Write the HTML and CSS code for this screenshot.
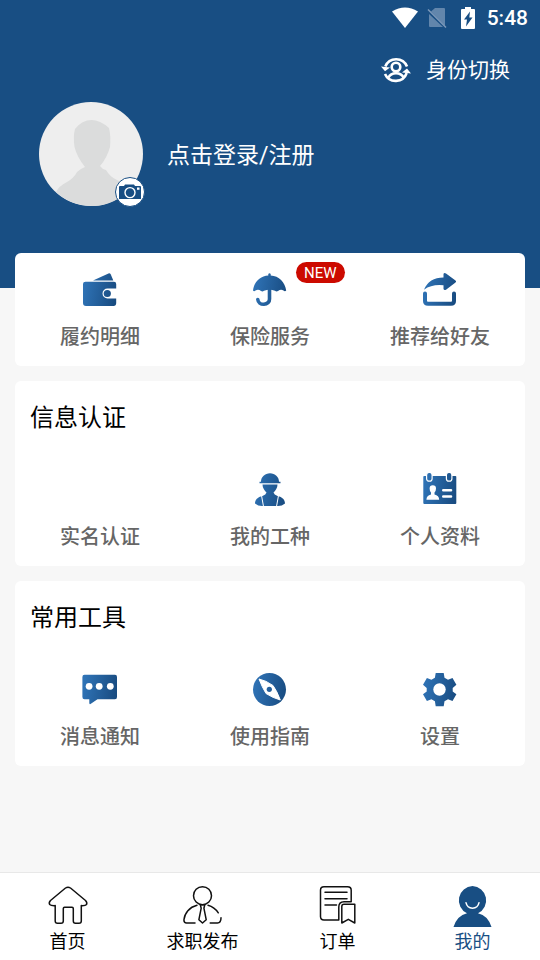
FILE: index.html
```html
<!DOCTYPE html>
<html lang="zh-CN">
<head>
<meta charset="utf-8">
<meta name="viewport" content="width=device-width, initial-scale=1">
<title>我的</title>
<link rel="stylesheet" href="styles.css">
</head>
<body>
<svg class="defs" aria-hidden="true">
  <defs>
    <linearGradient id="blue" gradientUnits="userSpaceOnUse" x1="0" y1="14" x2="34" y2="20">
      <stop offset="0" stop-color="#2f73b6"/>
      <stop offset="1" stop-color="#184b80"/>
    </linearGradient>
  </defs>
</svg>

<header class="hero">
  <div class="status">
    <svg width="26" height="22" viewBox="0 0 26 22" fill="#fff"><path d="M0 4.500Q13-3.500 26 4.500L13 21Z"/></svg>
    <svg class="sim" width="20" height="22" viewBox="0 0 20 22"><path d="M8 1h9q1 0 1 1v17L4 4.500ZM2 7l14 13H3q-1 0-1-1Z" fill="#6286ac"/><path d="M1 2.500L19 20.500" stroke="#7d9abb" stroke-width="1.500"/></svg>
    <svg width="14" height="22" viewBox="0 0 14 22"><path d="M4 0h6v2h3q1 0 1 1v18q0 1-1 1H1q-1 0-1-1V3q0-1 1-1h3Z" fill="#fff"/><path d="M9 4.500L3 12.500h3L5 19.500 11.500 10.500H8.300Z" fill="#184e83"/></svg>
    <time class="clock">5:48</time>
  </div>
  <button class="switch" type="button">
    <svg width="30" height="28" viewBox="0 0 30 28" fill="none" stroke="#fff" stroke-width="2.600">
      <path d="M4.300 10.500A11.700 11.700 0 0 1 26 10.500M25.700 17A11.700 11.700 0 0 1 4 18"/>
      <circle cx="15" cy="11" r="4.300"/>
      <path d="M7.500 21.500Q9.500 17.200 15 17.200T22.500 21.500"/>
      <path d="M0 10.500L9 11.500L4 15.200ZM21 16.500L26 12.500L30 17.500Z" fill="#fff" stroke="none"/>
    </svg>
    <span>身份切换</span>
  </button>
  <div class="profile">
    <button class="avatar" type="button" aria-label="头像">
      <svg class="avatar-face" viewBox="0 0 104 104">
        <circle cx="52" cy="52" r="52" fill="#eee"/>
        <path d="M52.500 18Q61 18 70 26Q72 34 71 45Q68 56 61 64Q63 67 67 68Q71 75 78 78Q87 82 91 87A52 52 0 0 1 17 90Q20 84 28 80Q35 76 38 70Q41 67 46 65Q38 55 35.500 45Q34 34 36 27Q43 18 52.500 18Z" fill="#dbdcdc"/>
      </svg>
      <svg class="avatar-camera" viewBox="0 0 30 30">
        <circle cx="15" cy="15" r="14.500" fill="#fff" stroke="#184e83"/>
        <path d="M5 9h4l1-1.500h9l1 1.500h5q1 0 1 1v12H4V10q0-1 1-1Z" fill="#184e83"/>
        <circle cx="15" cy="15.600" r="5" fill="none" stroke="#fff" stroke-width="1.400"/>
        <path d="M22 10.500h2.500v2.300h-2.500Z" fill="#fff"/>
      </svg>
    </button>
    <a class="login" href="#login">点击登录/注册</a>
  </div>
</header>

<main class="cards">
  <section class="card">
    <div class="grid">
      <a class="item" href="#contract">
        <svg class="icon" viewBox="0 0 34 34" fill="url(#blue)">
          <path d="M10 7.500L25.500 .4Q27 0 27.800 1.500L30.300 7.500Z"/>
          <path d="M2.500 8.700H31Q33.200 8.700 33.200 11V15.500H24.500A5 5 0 0 0 24.500 25.500H33.200V30Q33.200 33 30.500 33H3Q0 33 0 30V11Q0 8.700 2.500 8.700Z"/>
          <circle cx="24.300" cy="20.500" r="3.600"/>
        </svg>
        <span>履约明细</span>
      </a>
      <a class="item" href="#insurance">
        <svg class="icon" viewBox="0 0 34 34" fill="url(#blue)">
          <path d="M15.300 2.500V1Q16.500-.5 17.700 1V2.500C26 3 32 9 33.200 17.500Q32 19 30.500 17.500Q27.700 16 25 18Q23.500 19 22 17.800Q16.500 15.500 11 17.800Q9.500 19 8 18Q5.500 16 2.500 17.500Q1 19 0 17.500C1 9 7 3 15.300 2.500Z"/>
          <path d="M16.500 17V26A5.800 5 0 0 1 4.800 26.500" fill="none" stroke="url(#blue)" stroke-width="3.600" stroke-linecap="round"/>
        </svg>
        <span>保险服务</span>
        <em class="badge">NEW</em>
      </a>
      <a class="item" href="#share">
        <svg class="icon" viewBox="0 0 34 34" fill="url(#blue)">
          <path d="M20.500 1Q21-.5 23 .5L32.500 7.500Q33.800 8.500 32.500 9.500L23 16.700Q21 17.500 20.500 16V12.300Q9 11 1 16.700Q6 4.500 20.500 4.500Z"/>
          <path d="M2 20.500V28Q2 30.800 5 30.800H28Q31 30.800 31 28V20.500" fill="none" stroke="url(#blue)" stroke-width="4" stroke-linecap="round"/>
        </svg>
        <span>推荐给好友</span>
      </a>
    </div>
  </section>

  <section class="card">
    <h2 class="title">信息认证</h2>
    <div class="grid">
      <a class="item" href="#realname">
        <svg class="icon" viewBox="0 0 34 34"></svg>
        <span>实名认证</span>
      </a>
      <a class="item" href="#trade">
        <svg class="icon" viewBox="0 0 34 34" fill="url(#blue)">
          <path d="M6.500 8.700H8C8 4 12 .3 17 .3S26 4 26 8.700H27.500V10.200H6.500Z"/>
          <path d="M9.500 11.500H24.500C24.500 15 22.500 17.500 20.500 19.500Q21 21.500 24.500 23C29.500 24 32 27 32 30.500Q29 33 25 33H9Q5 33 2 30.500C2 27 4.500 24 9.500 23Q13 21.500 13.500 19.500C11.500 17.500 9.500 15 9.500 11.500Z"/>
          <path d="M8.500 22.500L10.500 33.500M25.500 22.500L23.500 33.500" stroke="#fff"/>
        </svg>
        <span>我的工种</span>
      </a>
      <a class="item" href="#data">
        <svg class="icon" viewBox="0 0 34 34" fill="url(#blue)">
          <path d="M1 3H32.500Q33.300 3 33.300 4V30Q33.300 31 32.300 31H1.300Q.3 31 .3 30V4Q.3 3 1 3Z"/>
          <g stroke="#fff" stroke-width="1.200"><rect x="3.600" y="-.6" width="5.500" height="8.800" rx="2.500"/><rect x="23.400" y="-.6" width="5.500" height="8.800" rx="2.500"/></g>
          <path d="M9.800 12.200Q13 12.200 13 15.500Q13 18 11.500 19.500V21.500Q16 22.500 16.200 26.700H3.400Q3.600 22.500 8 21.500V19.500Q6.600 18 6.600 15.500Q6.600 12.200 9.800 12.200Z" fill="#fff"/>
          <path d="M20.300 17.200H28M20.300 23.500H28" stroke="#fff" stroke-width="2.600" stroke-linecap="round"/>
        </svg>
        <span>个人资料</span>
      </a>
    </div>
  </section>

  <section class="card">
    <h2 class="title">常用工具</h2>
    <div class="grid">
      <a class="item" href="#messages">
        <svg class="icon" viewBox="0 0 34 34" fill="url(#blue)">
          <path d="M1.500 1.800H32Q34 1.800 34 4V24Q34 26.300 32 26.300H14.500L7.500 31Q6.300 31.500 6.300 30V26.300H1.500Q-.6 26.300-.6 24V4Q-.6 1.800 1.500 1.800Z"/>
          <g fill="#fff"><circle cx="6.100" cy="13.300" r="3.400"/><circle cx="16.200" cy="13.300" r="3.400"/><circle cx="27.300" cy="13.300" r="3.400"/></g>
        </svg>
        <span>消息通知</span>
      </a>
      <a class="item" href="#guide">
        <svg class="icon" viewBox="0 0 34 34" fill="url(#blue)">
          <circle cx="16.500" cy="16.500" r="16.500"/>
          <path d="M6 6Q13 7.500 20 12.500Q24 18 27.300 27Q20 25 13 20.500Q9 14 6 6Z" fill="#fff" stroke="#fff" stroke-linejoin="round"/>
          <circle cx="16.300" cy="16.300" r="2.600"/>
        </svg>
        <span>使用指南</span>
      </a>
      <a class="item" href="#settings">
        <svg class="icon" viewBox="0 0 34 34" fill="url(#blue)">
          <path d="M12.700 0H20.700L21.500 4.800L25 6.800L29.500 5L33.400 11.800L29.700 15V18.400L33.400 21.300L29.500 28L25 26.300L21.500 28.300L20.700 33.200H12.700L11.900 28.300L8.400 26.300L3.900 28L0 21.300L3.700 18.400V15L0 11.800L3.900 5L8.400 6.800L11.900 4.800Z"/>
          <circle cx="16.500" cy="16.500" r="6.200" fill="#fff"/>
        </svg>
        <span>设置</span>
      </a>
    </div>
  </section>
</main>

<nav class="tabs">
  <a class="tab" href="#home">
    <svg class="tab-icon" viewBox="0 0 40 41"><path d="M17.500 2Q20 .3 22.500 2L37.500 14.500Q39.500 16.800 38.500 18.500Q37.500 19.800 33.300 19.600V35Q33.300 37.300 31 37.300H27.500Q25.300 37.300 25.300 35V22.500Q25.300 21.300 24 21.300H16.500Q15.300 21.300 15.300 22.500V35Q15.300 37.300 13 37.300H9.500Q7.200 37.300 7.200 35V19.600Q3 19.800 1.700 18.500Q.5 16.800 2.500 14.500Z"/></svg>
    <span>首页</span>
  </a>
  <a class="tab" href="#jobs">
    <svg class="tab-icon" viewBox="0 0 40 41"><circle cx="19.500" cy="9.700" r="9"/><path d="M14 19.200C6.500 21 1.500 27 .9 34Q1 37 3.500 37H12M25 19.200Q31.500 21 35.300 26.800M38 31.800Q38 37 34.500 37H27.200M17.300 18.800H21.800L20.900 22.200L23.200 33.700L19.500 37L15.900 33.700L18.200 22.200Z"/></svg>
    <span>求职发布</span>
  </a>
  <a class="tab" href="#orders">
    <svg class="tab-icon" viewBox="0 0 40 41"><path d="M20.800 34H6Q2.500 34 2.500 30.500V4.200Q2.500.8 6 .8H29.500Q33.200.8 33.200 4.200V15.700H26Q20.800 15.700 20.800 21ZM7 6.300H29M7 12.700H29M7 19H18.500M23.800 20.500Q23.800 18.300 26 18.300H36.800V37L30.300 33.300L23.800 37Z"/></svg>
    <span>订单</span>
  </a>
  <a class="tab tab-active" href="#mine" aria-current="page">
    <svg class="tab-icon" viewBox="0 0 40 41"><path d="M19.500 0A14.300 14.300 0 0 1 25 27.200Q35 29.500 38.500 41H.5Q4 29.500 14 27.200A14.300 14.300 0 0 1 19.500 0Z" fill="#184e83" stroke="none"/><path d="M13 16.700C14.500 24 24.500 24 26 16.700" stroke="#fff"/></svg>
    <span>我的</span>
  </a>
</nav>
</body>
</html>
```

FILE: styles.css
```css
* {
  box-sizing: border-box;
}

body {
  margin: 0;
  min-height: 100vh;
  display: flex;
  flex-direction: column;
  background: #f7f7f7;
  color: #000;
  font-family: Roboto, "Noto Sans CJK SC", sans-serif;
}

a {
  color: inherit;
  text-decoration: none;
}

button {
  padding: 0;
  border: 0;
  background: none;
  color: inherit;
  font: inherit;
}

svg {
  display: block;
  overflow: visible;
}

.defs {
  position: absolute;
  width: 0;
  height: 0;
}

.hero {
  display: flex;
  flex-direction: column;
  padding: 6px 12px 82px;
  background: #184e83;
  color: #fff;
}

.status {
  display: flex;
  justify-content: flex-end;
  align-items: center;
  gap: 12px;
  height: 24px;
}

.sim {
  margin: 0 2px 0 -3px;
}

.clock {
  font-size: 21px;
  font-weight: 500;
  line-height: 26px;
}

.switch {
  display: flex;
  align-self: flex-end;
  align-items: center;
  gap: 15px;
  margin: 25px 18px 0 0;
  font-size: 21px;
  line-height: 30px;
}

.profile {
  display: flex;
  align-items: center;
  gap: 24px;
  margin: 17px 0 0 27px;
}

.avatar {
  position: relative;
  width: 104px;
  height: 104px;
}

.avatar-camera {
  position: absolute;
  right: -2px;
  bottom: -1px;
  width: 30px;
}

.login {
  padding-top: 4px;
  font-size: 23px;
  line-height: 32px;
}

.cards {
  display: flex;
  flex: 1;
  flex-direction: column;
  gap: 15px;
  margin-top: -35px;
  padding: 0 15px 15px;
}

.card {
  border-radius: 6px;
  background: #fff;
}

.title {
  margin: 0;
  padding: 19px 15px 17px;
  font-size: 24px;
  font-weight: 400;
  line-height: 36px;
}

.grid {
  display: grid;
  grid-template-columns: repeat(3, 1fr);
}

.item {
  position: relative;
  display: flex;
  flex-direction: column;
  align-items: center;
  gap: 15px;
  padding: 20px 0 14px;
  color: #666;
  font-size: 20px;
  font-weight: 500;
  line-height: 30px;
}

.icon {
  width: 34px;
  height: 34px;
}

.badge {
  position: absolute;
  top: 9px;
  left: calc(50% + 26px);
  padding: 1px 8px 0;
  border-radius: 11px;
  background: #cc0a00;
  color: #fff;
  font-size: 15px;
  font-style: normal;
  font-weight: 400;
  line-height: 20px;
}

.tabs {
  display: grid;
  grid-template-columns: repeat(4, 1fr);
  padding: 13px 0 5px;
  border-top: 1px solid #e8e8e8;
  background: #fff;
}

.tab {
  display: flex;
  flex-direction: column;
  align-items: center;
  gap: 2px;
  font-size: 18px;
  line-height: 26px;
}

.tab-icon {
  width: 40px;
  height: 41px;
  fill: none;
  stroke: #111;
  stroke-width: 1.5px;
  stroke-linecap: round;
  stroke-linejoin: round;
}

.tab-active {
  color: #184e83;
}
```
